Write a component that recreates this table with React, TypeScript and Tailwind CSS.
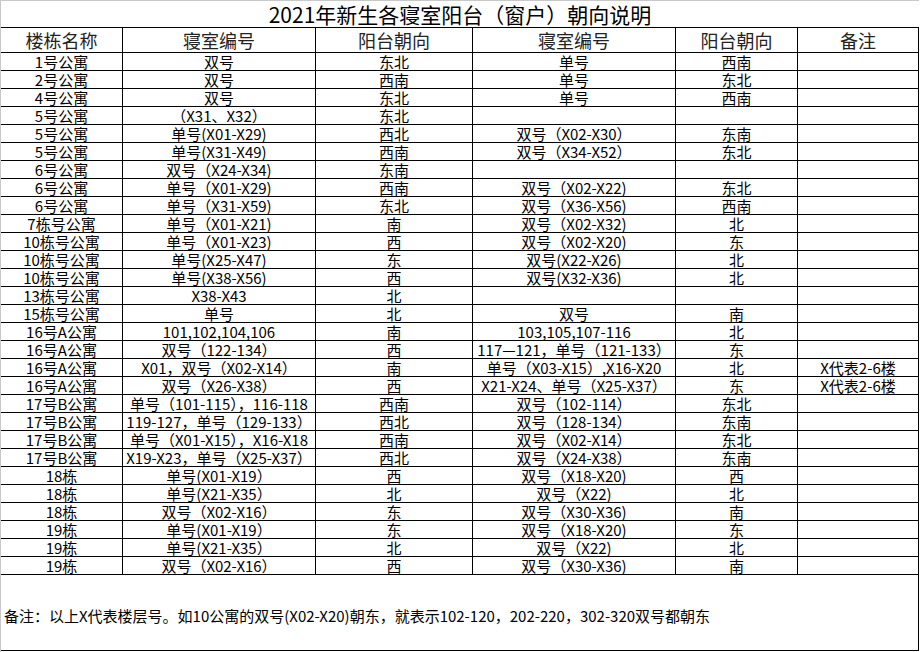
import React from 'react';

type Row = [string, string, string, string, string, string];

const rows: Row[] = [
  ['1号公寓', '双号', '东北', '单号', '西南', ''],
  ['2号公寓', '双号', '西南', '单号', '东北', ''],
  ['4号公寓', '双号', '东北', '单号', '西南', ''],
  ['5号公寓', '（X31、X32）', '东北', '', '', ''],
  ['5号公寓', '单号(X01-X29)', '西北', '双号（X02-X30）', '东南', ''],
  ['5号公寓', '单号(X31-X49)', '西南', '双号（X34-X52）', '东北', ''],
  ['6号公寓', '双号（X24-X34)', '东南', '', '', ''],
  ['6号公寓', '单号（X01-X29)', '西南', '双号（X02-X22)', '东北', ''],
  ['6号公寓', '单号（X31-X59)', '东北', '双号（X36-X56)', '西南', ''],
  ['7栋号公寓', '单号（X01-X21)', '南', '双号（X02-X32)', '北', ''],
  ['10栋号公寓', '单号（X01-X23)', '西', '双号（X02-X20)', '东', ''],
  ['10栋号公寓', '单号(X25-X47)', '东', '双号(X22-X26)', '北', ''],
  ['10栋号公寓', '单号(X38-X56)', '西', '双号(X32-X36)', '北', ''],
  ['13栋号公寓', 'X38-X43', '北', '', '', ''],
  ['15栋号公寓', '单号', '北', '双号', '南', ''],
  ['16号A公寓', '101,102,104,106', '南', '103,105,107-116', '北', ''],
  ['16号A公寓', '双号（122-134）', '西', '117—121，单号（121-133）', '东', ''],
  ['16号A公寓', 'X01，双号（X02-X14）', '南', '单号（X03-X15）,X16-X20', '北', 'X代表2-6楼'],
  ['16号A公寓', '双号（X26-X38）', '西', 'X21-X24、单号（X25-X37）', '东', 'X代表2-6楼'],
  ['17号B公寓', '单号（101-115），116-118', '西南', '双号（102-114）', '东北', ''],
  ['17号B公寓', '119-127，单号（129-133）', '西北', '双号（128-134）', '东南', ''],
  ['17号B公寓', '单号（X01-X15），X16-X18', '西南', '双号（X02-X14）', '东北', ''],
  ['17号B公寓', 'X19-X23，单号（X25-X37）', '西北', '双号（X24-X38）', '东南', ''],
  ['18栋', '单号(X01-X19）', '西', '双号（X18-X20)', '西', ''],
  ['18栋', '单号(X21-X35）', '北', '双号（X22)', '北', ''],
  ['18栋', '双号（X02-X16）', '东', '双号（X30-X36)', '南', ''],
  ['19栋', '单号(X01-X19）', '东', '双号（X18-X20)', '东', ''],
  ['19栋', '单号(X21-X35）', '北', '双号（X22)', '北', ''],
  ['19栋', '双号（X02-X16）', '西', '双号（X30-X36)', '南', ''],
];

const widths = ['w-[122px]', 'w-[193px]', 'w-[157px]', 'w-[203px]', 'w-[122px]', 'w-[121px]'];

const App: React.FC = () => {
  return (
    <div className="w-[920px] h-[652px] bg-white text-black font-['Noto_Sans_CJK_SC',sans-serif]">
      <div className="w-[919px] h-[652px] border-l border-t border-[#c8c8c8]">
        {/* title */}
        <div className="h-[27px] border-b border-black flex items-center justify-center text-[21px] leading-none">
          2021年新生各寝室阳台（窗户）朝向说明
        </div>

        {/* header */}
        <div className="flex h-[25px] border-b border-black">
          {['楼栋名称', '寝室编号', '阳台朝向', '寝室编号', '阳台朝向', '备注'].map((h, i) => (
            <div
              key={i}
              className={`${widths[i]} shrink-0 border-r border-black flex items-center justify-center text-[18px] leading-none text-[#222]`}
            >
              {h}
            </div>
          ))}
        </div>

        {/* data */}
        {rows.map((row, r) => (
          <div key={r} className="flex h-[18px] border-b border-black">
            {row.map((cell, i) => (
              <div
                key={i}
                className={`${widths[i]} shrink-0 border-r border-black flex items-center justify-center whitespace-nowrap text-[15px] leading-none`}
              >
                {cell}
              </div>
            ))}
          </div>
        ))}

        {/* footer note */}
        <div className="w-[918px] h-[76px] border-b border-r border-black flex items-center pl-[3px] pt-[6px] text-[15px] leading-none whitespace-nowrap">
          备注：以上X代表楼层号。如10公寓的双号(X02-X20)朝东，就表示102-120，202-220，302-320双号都朝东
        </div>
      </div>
    </div>
  );
};

export default App;
